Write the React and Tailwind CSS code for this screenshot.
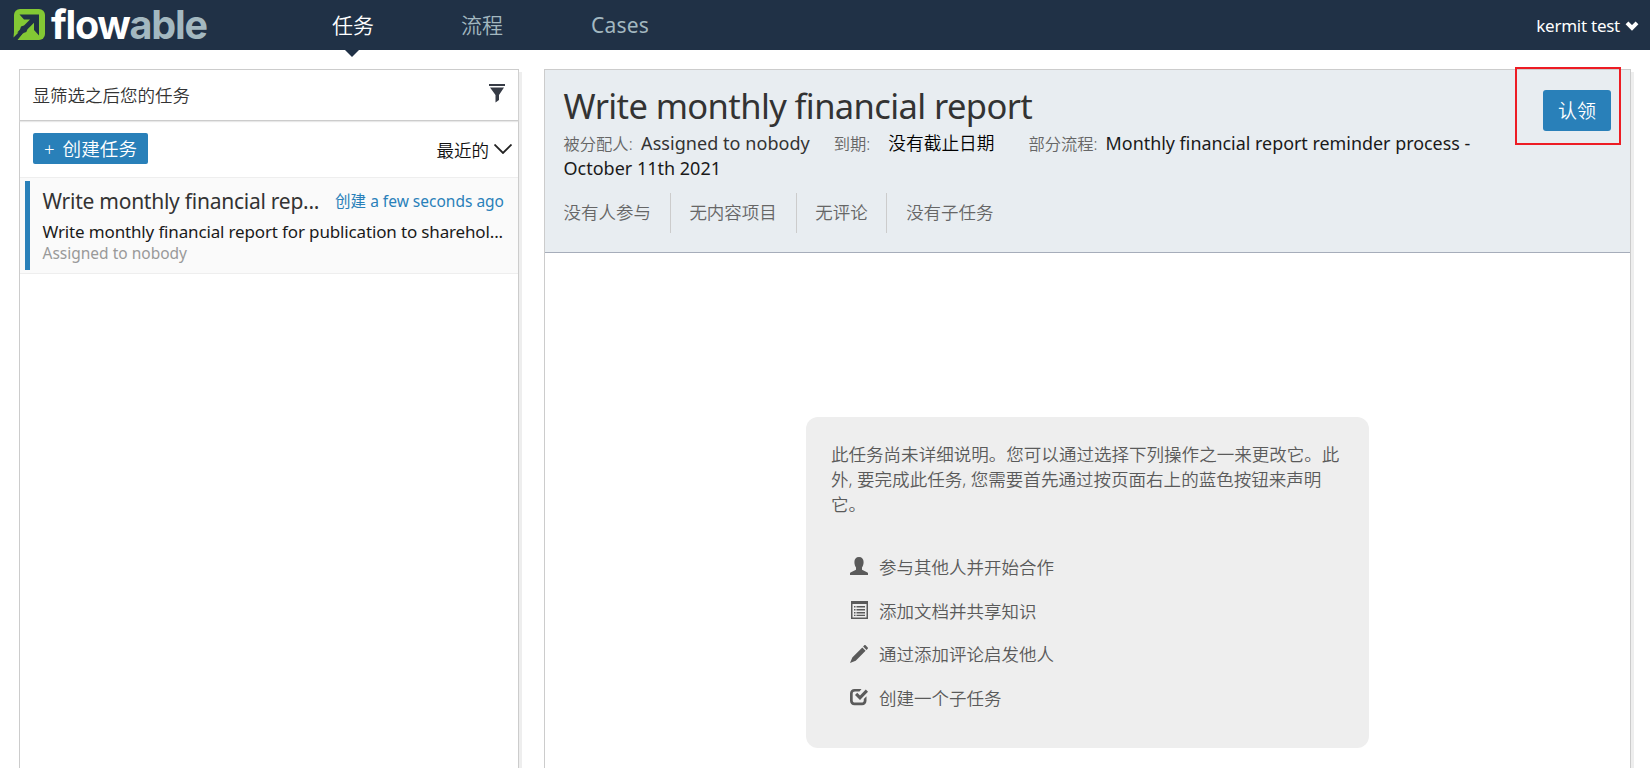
import React from "react";

function FlowableMark() {
  return (
    <svg viewBox="0 0 32 32" className="size-8 shrink-0">
      <rect x="1" y="0" width="31" height="31" rx="6" fill="#83c834" />
      <path d="M6.500 5.500H26V26.500L21 21V13.800L14.500 20.300L13.300 23L10.500 24L4 32H0V28L7 20.500L8 17.500L11 16.500L17 10.500H11z" fill="#203146" />
      <path d="M1 23L0.500 28.500L5.500 23.500z M4.500 31L10 24.500V31z" fill="#83c834" />
    </svg>
  );
}

function FilterIcon() {
  return (
    <svg viewBox="0 0 16 19" className="mb-[3px] h-[19px] w-4" fill="#363b45">
      <path d="M0 0h16v2H0zM1 3.500h14L10 11v5L6.500 18.500V11z" />
    </svg>
  );
}

const icons = {
  user: <path d="M9 0c3 0 4.600 2 4.600 5 0 2.500-.8 4.500-1.600 5.600v2.200L17 15.200c.7.300 1 .6 1 1.300V18H0v-1.500c0-.7.300-1 1-1.300l5-2.400v-2.200C5.200 9.500 4.400 7.500 4.400 5c0-3 1.600-5 4.600-5z" />,
  list: <path fillRule="evenodd" d="M1 0h17v18H1zM2.500 3v13.500h14V3zM4 5h1.500v1.500H4zM6.500 5h8.500v1.500H6.500zM4 8h1.500v1.500H4zM6.500 8h8.500v1.500H6.500zM4 11h1.500v1.500H4zM6.500 11h8.500v1.500H6.500zM4 13.800h1.500v1.200H4zM6.500 13.800h8.500v1.200H6.500z" />,
  pencil: <path d="M15.600.3l2.100 2.100c.4.400.4.900 0 1.300l-1.200 1.200-3.400-3.400L14.300.3c.4-.4.900-.4 1.300 0zM12.300 2.500l3.300 3.300-9.900 9.900L0 18l2.300-5.500z" />,
  check: <path d="M4.500 1H11.500L9.500 3.500H5C3.500 3.500 2.700 4.300 2.700 5.800v6.500c0 1.500.8 2.300 2.300 2.300h6.500c1.500 0 2.300-.8 2.300-2.300v-1.300l2.700-2.700v4.500c0 2.700-1.800 4.500-4.500 4.500H4.500C1.800 17.300 0 15.500 0 12.800V5.500C0 2.800 1.800 1 4.500 1zM15.800 1.500L18 3.700l-8 8.300-5-5 2.200-2.200L10 7.600z" />,
};

const suggestions = [
  ["user", "参与其他人并开始合作"],
  ["list", "添加文档并共享知识"],
  ["pencil", "通过添加评论启发他人"],
  ["check", "创建一个子任务"],
];

const summary = ["没有人参与", "无内容项目", "无评论", "没有子任务"];

function Header() {
  return (
    <header className="flex h-[50px] shrink-0 items-center bg-[#203146] pl-[13px] pr-[11px]">
      <FlowableMark />
      <div className="ml-1.5 w-[281px]">
        <span className="font-['Inter',sans-serif] text-[39.500px] font-bold leading-[51px] tracking-[-1.25px] text-white">
          flow<span className="text-[#a3b8c0]">able</span>
        </span>
      </div>
      <nav className="flex h-[50px] items-center text-[21px] text-[#a3b8c0]">
        <a className="relative flex h-[50px] w-[42px] items-center justify-center font-[350] text-white">
          任务
          <svg viewBox="0 0 14 7" className="absolute left-[13px] top-[50px] h-[7px] w-3.5">
            <path d="M0 0h14L7 7z" fill="#203146" />
          </svg>
        </a>
        <a className="ml-[87px] font-[350]">流程</a>
        <a className="ml-[88px] tracking-[0.2px]">Cases</a>
      </nav>
      <div className="ml-auto flex items-center gap-[5px] text-white">
        <span className="text-[17px] tracking-[-0.25px]">kermit test</span>
        <svg viewBox="0 0 14 10" className="mt-px h-2.5 w-3.5">
          <path d="M2 1.800L7 6.800L12 1.800" fill="none" stroke="#fff" strokeWidth="4" />
        </svg>
      </div>
    </header>
  );
}

function TaskList() {
  return (
    <section className="flex w-[500px] shrink-0 flex-col border border-b-0 border-[#ccc] shadow-[3px_3px_0_#eee]">
      <div className="flex h-[51px] shrink-0 items-center justify-between border-b border-[#ccc] pl-[12.500px] pr-[13px] font-[350] text-[#333] shadow-[0_1px_1px_#e8e8e8]">
        <span>显筛选之后您的任务</span>
        <FilterIcon />
      </div>
      <div className="flex h-14 shrink-0 items-center justify-between pl-[13px] pr-1.5 font-[350]">
        <button className="mb-0.5 flex h-[31px] w-[115px] items-center justify-center gap-2 rounded-[2px] bg-[#2980b9] text-[18.600px] text-white">
          <span>+</span>
          <span>创建任务</span>
        </button>
        <div className="flex items-center gap-[5px]">
          <span className="mt-0.5 text-[#111]">最近的</span>
          <svg viewBox="0 0 18 10" className="h-2.5 w-[18px]">
            <path d="M.5.500L9 9L17.500.500" fill="none" stroke="#222" strokeWidth="1.800" />
          </svg>
        </div>
      </div>
      <div className="flex h-[97px] gap-[12.500px] border-y border-[#eee] bg-[#fafafa] py-[3px] pl-[5px] pr-3.5">
        <div className="w-[5px] bg-[#2980b9]" />
        <div className="min-w-0 flex-1 whitespace-nowrap pt-[3px]">
          <div className="flex h-[35px] items-center justify-between">
            <span className="text-[21px] tracking-[-0.25px] text-[#333]">Write monthly financial rep...</span>
            <span className="text-[15.500px] text-[#2980b9]">创建 a few seconds ago</span>
          </div>
          <div className="text-[17px] tracking-[-0.15px]">Write monthly financial report for publication to sharehol...</div>
          <div className="-mt-px text-[15.500px] leading-[21px] text-[#999]">Assigned to nobody</div>
        </div>
      </div>
    </section>
  );
}

function TaskHeader() {
  return (
    <div className="relative h-[183px] border-b border-[#a6adba] bg-[#e8edf1] pl-[18.500px]">
      <h1 className="pt-[11px] text-[34.500px] leading-[50px] tracking-[-0.6px] text-[#333]">Write monthly financial report</h1>
      <div className="flex h-[25px] items-baseline whitespace-nowrap">
        <span className="mr-[8.500px] text-[16.300px] font-[350] text-[#666]">被分配人:</span>
        <span className="mr-6 text-[18px] tracking-[0.05px] text-[#333]">Assigned to nobody</span>
        <span className="mr-[18px] text-[16.300px] font-[350] text-[#666]">到期:</span>
        <span className="mr-[34px] text-[17.700px] font-[350] text-[#000]">没有截止日期</span>
        <span className="mr-2 text-[16.300px] font-[350] text-[#666]">部分流程:</span>
        <span className="text-[17.900px]">Monthly financial report reminder process -</span>
      </div>
      <div className="h-[25px] text-[18px]">October 11th 2021</div>
      <div className="mt-3 flex font-[350] text-[#666]">
        {summary.map((label) => (
          <span key={label} className="flex h-10 items-center border-r border-[#ccc] px-[18.700px] first:pl-0 last:border-0">
            <span className="mb-px">{label}</span>
          </span>
        ))}
      </div>
      <button className="absolute right-[19px] top-5 h-[41px] w-[68px] rounded-[3px] bg-[#2980b9] pt-0.5 text-[19px] font-[350] text-white">认领</button>
      <div className="absolute right-[9px] top-[-3px] h-[78px] w-[106px] border-2 border-[#ed1c24]" />
    </div>
  );
}

export default function App() {
  return (
    <div className="flex h-[768px] w-[1650px] flex-col overflow-hidden bg-white font-['Noto_Sans','Noto_Sans_CJK_SC',sans-serif] text-[17.500px] leading-[25px] text-[#1a1a1a]">
      <Header />
      <main className="flex min-h-0 flex-1 gap-[25px] pl-[19px] pr-[19px] pt-[19px]">
        <TaskList />
        <section className="flex flex-1 flex-col border border-b-0 border-[#ccc] shadow-[3px_3px_0_#eee]">
          <TaskHeader />
          <div className="mb-5 ml-[261px] mt-auto h-[331px] w-[563px] rounded-xl bg-[#eee] px-[25px] pt-[25px] font-[350] text-[#5a5a5a]">
            <p className="mr-[-8px] text-[17.550px]">
              此任务尚未详细说明。您可以通过选择下列操作之一来更改它。此
              <br />
              外, 要完成此任务, 您需要首先通过按页面右上的蓝色按钮来声明
              <br />
              它。
            </p>
            <ul className="mt-[28.500px] pl-[19px]">
              {suggestions.map(([icon, label]) => (
                <li key={icon} className="flex h-[43.700px] items-center gap-[11px]">
                  <svg viewBox="0 0 18 18" className="mb-0.5 size-[18px]" fill="currentColor">{icons[icon]}</svg>
                  <span>{label}</span>
                </li>
              ))}
            </ul>
          </div>
        </section>
      </main>
    </div>
  );
}
